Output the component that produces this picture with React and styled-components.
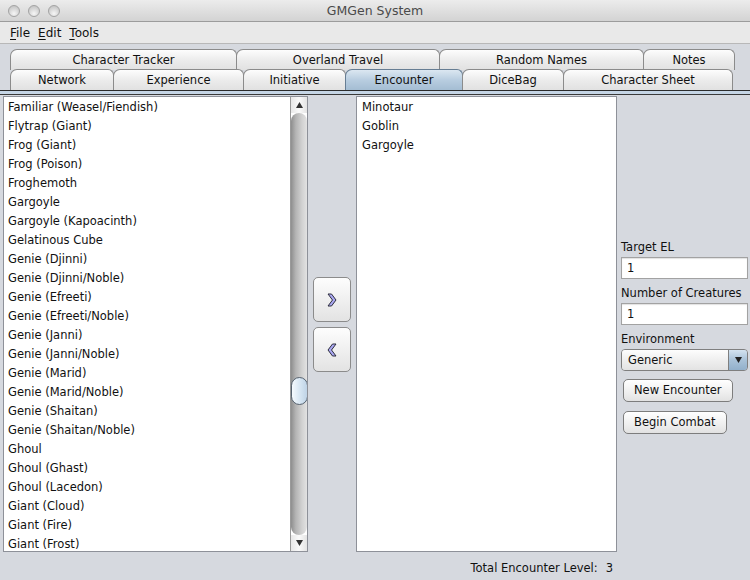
import React from "react";
import styled, { createGlobalStyle } from "styled-components";

const Global = createGlobalStyle`
  html, body { margin: 0; padding: 0; }
  body {
    width: 750px;
    height: 580px;
    overflow: hidden;
    font-family: "DejaVu Sans", "Liberation Sans", sans-serif;
    font-size: 11.5px;
    color: #111;
  }
`;

const monsters = [
  "Familiar (Weasel/Fiendish)", "Flytrap (Giant)", "Frog (Giant)", "Frog (Poison)",
  "Froghemoth", "Gargoyle", "Gargoyle (Kapoacinth)", "Gelatinous Cube",
  "Genie (Djinni)", "Genie (Djinni/Noble)", "Genie (Efreeti)", "Genie (Efreeti/Noble)",
  "Genie (Janni)", "Genie (Janni/Noble)", "Genie (Marid)", "Genie (Marid/Noble)",
  "Genie (Shaitan)", "Genie (Shaitan/Noble)", "Ghoul", "Ghoul (Ghast)",
  "Ghoul (Lacedon)", "Giant (Cloud)", "Giant (Fire)", "Giant (Frost)",
];

const encounter = ["Minotaur", "Goblin", "Gargoyle"];

const topTabs = [
  { label: "Character Tracker", w: 227 },
  { label: "Overland Travel", w: 204 },
  { label: "Random Names", w: 205 },
  { label: "Notes", w: 92 },
];

const bottomTabs = [
  { label: "Network", w: 104 },
  { label: "Experience", w: 131 },
  { label: "Initiative", w: 103 },
  { label: "Encounter", w: 118, active: true },
  { label: "DiceBag", w: 102 },
  { label: "Character Sheet", w: 170 },
];

export default function App() {
  return (
    <Window>
      <Global />
      <TitleBar>
        <Lights>
          <Light />
          <Light />
          <Light />
        </Lights>
        <Title>GMGen System</Title>
      </TitleBar>
      <MenuBar>
        <MenuItem><u>F</u>ile</MenuItem>
        <MenuItem><u>E</u>dit</MenuItem>
        <MenuItem><u>T</u>ools</MenuItem>
      </MenuBar>
      <Body>
        <Tabs>
          <TabRow>
            {topTabs.map((t) => (
              <Tab key={t.label} style={{ width: t.w }}>{t.label}</Tab>
            ))}
          </TabRow>
          <TabRow $lower>
            {bottomTabs.map((t) => (
              <Tab key={t.label} $active={t.active} style={{ width: t.w }}>{t.label}</Tab>
            ))}
          </TabRow>
        </Tabs>
        <ContentEdge />
        <Content>
          <ListBox>
            <Items>
              {monsters.map((m) => (
                <Item key={m}>{m}</Item>
              ))}
            </Items>
            <ScrollBar>
              <ArrowBtn>
                <svg width="7" height="6" viewBox="0 0 7 6"><path d="M3.5 0 L7 6 L0 6 Z" fill="#333" /></svg>
              </ArrowBtn>
              <Track>
                <Thumb />
              </Track>
              <ArrowBtn>
                <svg width="7" height="6" viewBox="0 0 7 6"><path d="M0 0 L7 0 L3.5 6 Z" fill="#333" /></svg>
              </ArrowBtn>
            </ScrollBar>
          </ListBox>
          <MoveColumn>
            <MoveButton>
              <svg width="10" height="14" viewBox="0 0 10 14">
                <path d="M1 1 L4.5 1 L9 7 L4.5 13 L1 13 L5.5 7 Z" fill="#a9a7f2" stroke="#2d2d3d" strokeWidth="1" />
              </svg>
            </MoveButton>
            <MoveButton>
              <svg width="10" height="14" viewBox="0 0 10 14">
                <path d="M9 1 L5.5 1 L1 7 L5.5 13 L9 13 L4.5 7 Z" fill="#a9a7f2" stroke="#2d2d3d" strokeWidth="1" />
              </svg>
            </MoveButton>
          </MoveColumn>
          <ListBox>
            <Items>
              {encounter.map((m) => (
                <Item key={m} $right>{m}</Item>
              ))}
            </Items>
          </ListBox>
          <SidePanel>
            <FieldLabel>Target EL</FieldLabel>
            <TextField>1</TextField>
            <FieldLabel>Number of Creatures</FieldLabel>
            <TextField>1</TextField>
            <FieldLabel>Environment</FieldLabel>
            <Combo>
              <ComboText>Generic</ComboText>
              <ComboArrow>
                <svg width="7" height="6" viewBox="0 0 7 6"><path d="M0 0 L7 0 L3.5 6 Z" fill="#222" /></svg>
              </ComboArrow>
            </Combo>
            <PushButton>New Encounter</PushButton>
            <PushButton>Begin Combat</PushButton>
          </SidePanel>
          <Footer>
            <span>Total Encounter Level:</span>
            <span>3</span>
          </Footer>
        </Content>
      </Body>
    </Window>
  );
}

const Window = styled.div`
  width: 750px;
  height: 580px;
  display: flex;
  flex-direction: column;
  background: #d6d9df;
`;

const TitleBar = styled.div`
  height: 22px;
  flex: none;
  display: flex;
  align-items: center;
  position: relative;
  background: linear-gradient(#ececec, #d3d3d3);
  border-bottom: 1px solid #9c9c9c;
  box-sizing: border-box;
`;

const Lights = styled.div`
  display: flex;
  gap: 8px;
  padding-left: 8px;
`;

const Light = styled.div`
  width: 12px;
  height: 12px;
  border-radius: 50%;
  box-sizing: border-box;
  border: 1px solid #a3a3a3;
  background: radial-gradient(circle at 50% 75%, #f6f6f6, #d2d2d2 60%, #bdbdbd);
`;

const Title = styled.div`
  position: absolute;
  left: 0;
  right: 0;
  text-align: center;
  font-size: 12.5px;
  color: #4a4a4a;
  pointer-events: none;
`;

const MenuBar = styled.div`
  height: 22px;
  flex: none;
  display: flex;
  align-items: center;
  gap: 8px;
  padding-left: 10px;
  background: #e9e9e9;
  border-bottom: 1px solid #b8b8b8;
  box-sizing: border-box;
`;

const MenuItem = styled.span`
  font-size: 12px;
  color: #111;
  u { text-decoration: underline; text-underline-offset: 2px; }
`;

const Body = styled.div`
  flex: 1;
  display: flex;
  flex-direction: column;
  padding-top: 5px;
`;

const Tabs = styled.div`
  padding-left: 10px;
  display: flex;
  flex-direction: column;
`;

const TabRow = styled.div`
  display: flex;
  height: 21px;
  margin-top: ${(p) => (p.$lower ? "-1px" : "0")};
`;

const Tab = styled.div`
  box-sizing: border-box;
  height: 21px;
  display: flex;
  align-items: center;
  justify-content: center;
  padding-bottom: 1px;
  font-size: 11.5px;
  border: 1px solid ${(p) => (p.$active ? "#667d93" : "#8b8b8b")};
  border-bottom: none;
  border-radius: 7px 6px 0 0;
  margin-right: -1px;
  background: ${(p) =>
    p.$active
      ? "linear-gradient(#dbe7f1, #b8cde0 50%, #a4bdd3)"
      : "linear-gradient(#fdfdfd, #ececec 50%, #e1e1e1)"};
  color: #111;
`;

const ContentEdge = styled.div`
  height: 3px;
  flex: none;
  background: #c5d5e5;
  border-top: 1px solid #2b2b2b;
  border-bottom: 1px solid #3a3a3a;
`;

const Content = styled.div`
  display: grid;
  grid-template-columns: 305px 38px 261px 127px;
  grid-template-rows: 456px 1fr;
  column-gap: 5px;
  padding: 1px 0 0 3px;
  flex: 1;
`;

const ListBox = styled.div`
  background: #fff;
  border: 1px solid #8e9199;
  display: flex;
  box-sizing: border-box;
  overflow: hidden;
`;

const Items = styled.div`
  flex: 1;
  display: flex;
  flex-direction: column;
  padding-top: 1px;
`;

const Item = styled.div`
  height: 19px;
  line-height: 19px;
  padding-left: ${(p) => (p.$right ? "5px" : "4px")};
  font-size: 11.5px;
  white-space: nowrap;
`;

const ScrollBar = styled.div`
  width: 16px;
  display: flex;
  flex-direction: column;
  border-left: 1px solid #9a9a9a;
`;

const ArrowBtn = styled.div`
  height: 16px;
  flex: none;
  display: flex;
  align-items: center;
  justify-content: center;
  background: linear-gradient(to right, #e8e8e8, #fafafa 50%, #e4e4e4);
`;

const Track = styled.div`
  flex: 1;
  position: relative;
  border-radius: 8px;
  background: linear-gradient(to right, #8e8e8e, #b4b4b4 30%, #d2d2d2 70%, #e2e2e2);
`;

const Thumb = styled.div`
  position: absolute;
  left: 0;
  right: -1px;
  top: 264px;
  height: 28px;
  box-sizing: border-box;
  border-radius: 14px;
  border: 1px solid #56626f;
  background: linear-gradient(to right, #f6fafd, #d3e3f1 60%, #bfd3e6);
`;

const MoveColumn = styled.div`
  display: flex;
  flex-direction: column;
  justify-content: center;
  gap: 5px;
  padding-top: 1px;
`;

const MoveButton = styled.div`
  height: 45px;
  box-sizing: border-box;
  border: 1px solid #8b8b8b;
  border-radius: 5px;
  background: linear-gradient(#fdfdfd, #f0f0f0 50%, #e3e3e3);
  display: flex;
  align-items: center;
  justify-content: center;
`;

const SidePanel = styled.div`
  display: flex;
  flex-direction: column;
  align-items: flex-start;
  margin-left: -1px;
  padding-top: 143px;
`;

const FieldLabel = styled.div`
  font-size: 11.5px;
  height: 16px;
  line-height: 16px;
  margin-bottom: 2px;
`;

const TextField = styled.div`
  box-sizing: border-box;
  width: 127px;
  height: 22px;
  background: #fff;
  border: 1px solid #a2a2a2;
  box-shadow: inset 0 1px 1px rgba(0, 0, 0, 0.12);
  padding-left: 5px;
  line-height: 21px;
  font-size: 11.5px;
  margin-bottom: 6px;
`;

const Combo = styled.div`
  box-sizing: border-box;
  width: 127px;
  height: 22px;
  display: flex;
  border: 1px solid #7f7f7f;
  border-radius: 4px;
  overflow: hidden;
  margin-bottom: 8px;
`;

const ComboText = styled.div`
  flex: 1;
  padding-left: 6px;
  line-height: 20px;
  font-size: 11.5px;
  background: linear-gradient(#fdfdfd, #efefef 50%, #e3e3e3);
`;

const ComboArrow = styled.div`
  width: 18px;
  border-left: 1px solid #7f7f7f;
  display: flex;
  align-items: center;
  justify-content: center;
  background: linear-gradient(#d4e3f0, #a9c2d8 50%, #92b0cb);
`;

const PushButton = styled.div`
  box-sizing: border-box;
  height: 23px;
  margin-left: 2px;
  padding: 0 10px;
  border: 1px solid #7d7d7d;
  border-radius: 5px;
  background: linear-gradient(#ffffff, #f1f1f1 50%, #e2e2e2);
  line-height: 21px;
  font-size: 11.5px;
  margin-bottom: 9px;
`;

const Footer = styled.div`
  grid-column: 3;
  display: flex;
  justify-content: flex-end;
  align-items: center;
  gap: 8px;
  padding: 2px 4px 0 0;
  font-size: 11.5px;
  height: 28px;
`;
